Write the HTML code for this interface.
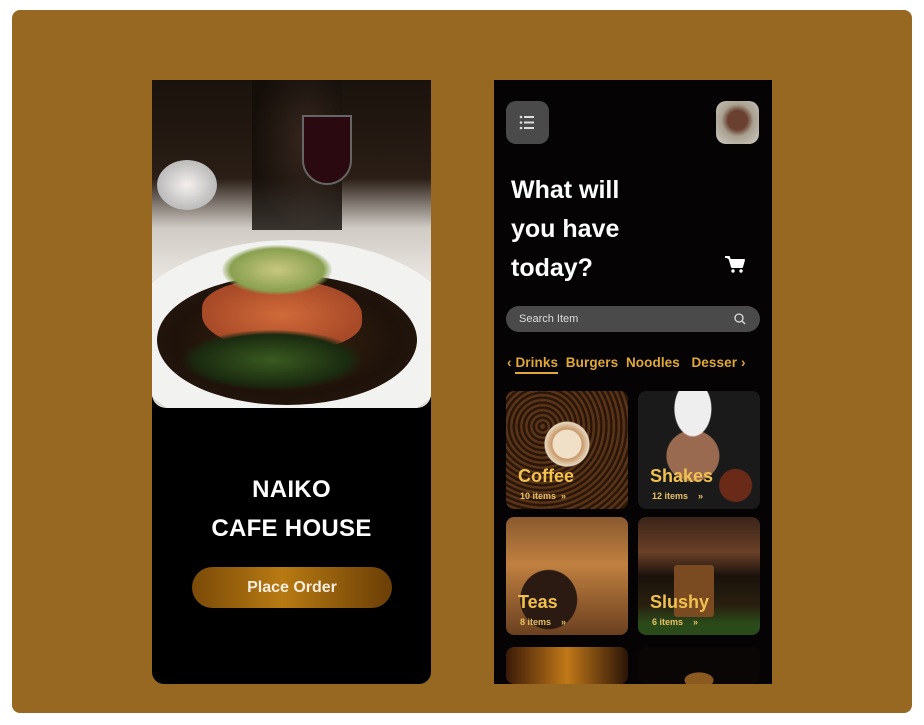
<!DOCTYPE html>
<html style="width:924px;height:725px;overflow:hidden"><head><meta charset="utf-8"><style>
*{margin:0;padding:0;box-sizing:border-box}
body{width:924px;height:725px;background:#fff;position:relative;overflow:hidden;font-family:"Liberation Sans",sans-serif}
.frame{position:absolute;left:12px;top:10px;width:900px;height:703px;background:#976821;border-radius:8px}
.p1{position:absolute;left:152px;top:80px;width:279px;height:604px;background:#000;border-radius:0 0 12px 12px;overflow:hidden}
.photo{position:absolute;left:0;top:0;width:279px;height:328px;border-radius:0 0 14px 14px;overflow:hidden;background:linear-gradient(180deg,#1a120c 0%,#2a1e16 30%,#cfcac4 45%,#e8e4df 60%,#ddd8d2 100%)}
.p2{position:absolute;left:494px;top:80px;width:278px;height:604px;background:#050303;overflow:hidden}
.t{position:absolute;color:#fff;font-weight:bold}
.card{position:absolute;width:122px;height:118px;border-radius:8px;overflow:hidden}
.card .n{position:absolute;left:12px;bottom:22px;color:#f0c050;font-weight:bold;font-size:18px}
.card .c{position:absolute;left:14px;bottom:8px;color:#e8c060;font-weight:bold;font-size:9px}
</style></head><body>
<div class="frame"></div>
<div class="p1">
 <div class="photo">
  <div style="position:absolute;left:100px;top:0;width:90px;height:150px;background:radial-gradient(ellipse at 60% 40%,#3a2a22,#120c08 70%);opacity:.8"></div>
  <div style="position:absolute;left:150px;top:35px;width:50px;height:70px;border-radius:0 0 25px 25px;background:#2a0a10;border:2px solid #666"></div>
  <div style="position:absolute;left:5px;top:80px;width:60px;height:50px;border-radius:50%;background:radial-gradient(#f4f0ee,#bbb 70%,transparent 72%)"></div>
  <div style="position:absolute;left:-30px;top:160px;width:340px;height:200px;border-radius:50%;background:#f2f2f0"></div>
  <div style="position:absolute;left:5px;top:195px;width:260px;height:130px;border-radius:50%;background:radial-gradient(ellipse,#3a2410 0%,#1e120a 60%,#2a1a10 100%)"></div>
  <div style="position:absolute;left:50px;top:200px;width:160px;height:70px;border-radius:40% 50% 40% 50%;background:radial-gradient(ellipse,#d06a3a,#a84a28 70%)"></div>
  <div style="position:absolute;left:70px;top:165px;width:110px;height:50px;border-radius:50%;background:radial-gradient(#c8c880,#8aa050 60%,transparent 72%)"></div>
  <div style="position:absolute;left:30px;top:250px;width:180px;height:60px;border-radius:50%;background:radial-gradient(#3a5a20,#1a2a10 60%,transparent 72%)"></div>
 </div>
 <div class="t" style="left:0;width:279px;text-align:center;top:390px;font-size:24px;line-height:39px;letter-spacing:.3px">NAIKO<br>CAFE HOUSE</div>
 <div style="position:absolute;left:40px;top:487px;width:200px;height:41px;border-radius:21px;background:linear-gradient(90deg,#7a4a08,#b87a12 45%,#6a3e06 100%);color:#f4ecdc;font-weight:bold;font-size:16px;text-align:center;line-height:41px">Place Order</div>
</div>
<div class="p2">
 <div style="position:absolute;left:12px;top:21px;width:43px;height:43px;border-radius:10px;background:#4a4a4a">
  <svg width="43" height="43" viewBox="0 0 43 43"><g fill="#ddd"><circle cx="15" cy="16" r="1.3"/><circle cx="15" cy="21.5" r="1.3"/><circle cx="15" cy="27" r="1.3"/><rect x="18" y="15" width="10" height="2"/><rect x="18" y="20.5" width="10" height="2"/><rect x="18" y="26" width="10" height="2"/></g></svg>
 </div>
 <div style="position:absolute;left:222px;top:21px;width:43px;height:43px;border-radius:10px;background:radial-gradient(circle at 50% 45%,#6a4030 0 30%,#a8a090 50%,#d0ccc4 100%)"></div>
 <div class="t" style="left:17px;top:91px;font-size:25px;line-height:39px">What will<br>you have<br>today?</div>
 <svg style="position:absolute;left:230px;top:175px" width="22" height="20" viewBox="0 0 22 20"><path d="M1 2h4l3 10h10l2-7H6" fill="#fff" stroke="#fff" stroke-width="2" stroke-linejoin="round"/><circle cx="9" cy="16" r="1.7" fill="#fff"/><circle cx="17" cy="16" r="1.7" fill="#fff"/></svg>
 <div style="position:absolute;left:12px;top:226px;width:254px;height:26px;border-radius:13px;background:#4a4a4a;color:#ddd;font-size:11px;line-height:26px;padding-left:13px">Search Item
  <svg style="position:absolute;right:14px;top:7px" width="12" height="12" viewBox="0 0 12 12"><circle cx="5" cy="5" r="4" fill="none" stroke="#ddd" stroke-width="1.3"/><path d="M8 8l3 3" stroke="#ddd" stroke-width="1.3"/></svg></div>
 <div style="position:absolute;left:13px;top:275px;color:#e0a838;font-weight:bold;font-size:13.5px;letter-spacing:.1px;white-space:nowrap;word-spacing:0">‹ <span style="border-bottom:2px solid #e0a838;padding-bottom:2px">Drinks</span>&nbsp; Burgers&nbsp; Noodles&nbsp;&nbsp; Desser ›</div>
 <div class="card" style="left:12px;top:311px;background:radial-gradient(circle at 50% 45%,#f0e0c8 0 14px,#c89868 15px,#e8d8c0 22px,transparent 23px),repeating-radial-gradient(circle at 30% 30%,#5a3418 0 2px,#2a1608 3px 5px)"><div class="n">Coffee</div><div class="c">10 items &nbsp;»</div></div>
 <div class="card" style="left:144px;top:311px;background:radial-gradient(ellipse at 45% 15%,#eee 0 18px,transparent 19px),radial-gradient(ellipse at 45% 55%,#9a6a50 0 26px,transparent 27px),radial-gradient(circle at 80% 80%,#6a2a18 0 16px,transparent 17px),#1a1a1a"><div class="n">Shakes</div><div class="c">12 items &nbsp;&nbsp;&nbsp;»</div></div>
 <div class="card" style="left:12px;top:437px;background:radial-gradient(ellipse at 35% 70%,#2a1a12 0 28px,transparent 29px),linear-gradient(180deg,#8a5a30,#c08040 40%,#6a4020 100%)"><div class="n">Teas</div><div class="c">8 items &nbsp;&nbsp;&nbsp;»</div></div>
 <div class="card" style="left:144px;top:437px;background:linear-gradient(180deg,#3a2418 0%,#6a4028 30%,#1a120c 50%,#2a2010 75%,#2a4a1a 90%),#222"><div style="position:absolute;left:36px;top:48px;width:40px;height:52px;background:#7a4a20;border-radius:3px"></div><div class="n">Slushy</div><div class="c">6 items &nbsp;&nbsp;&nbsp;»</div></div>
 <div class="card" style="left:12px;top:567px;height:37px;background:linear-gradient(90deg,#3a1a08,#c07818 50%,#2a1408)"></div>
 <div class="card" style="left:144px;top:567px;height:37px;background:radial-gradient(ellipse at 50% 90%,#8a5a20 0 14px,transparent 15px),#0a0606"></div>
</div>
</body></html>
